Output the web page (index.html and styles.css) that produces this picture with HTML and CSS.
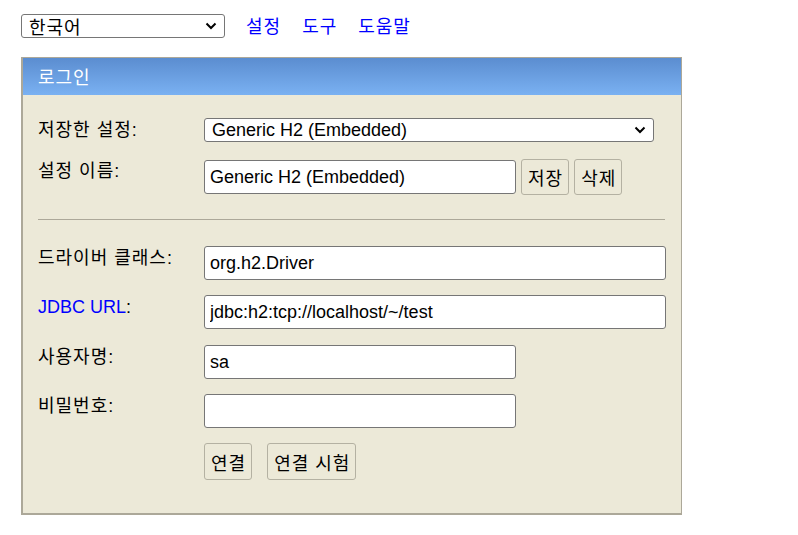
FILE: index.html
```html
<!DOCTYPE html>
<html lang="ko">
<head>
<meta charset="utf-8">
<title>H2 Console</title>
<link rel="stylesheet" href="styles.css">
</head>
<body>
<div class="topbar">
  <span class="sel-wrap">
    <select class="lang"><option>한국어</option></select>
    <svg class="chev" width="12" height="8" viewBox="0 0 12 8"><path d="M1.5 1.5 L6 6 L10.5 1.5" fill="none" stroke="#000" stroke-width="2"/></svg>
  </span>
  <a class="toplink" href="#">설정</a>
  <a class="toplink" href="#">도구</a>
  <a class="toplink" href="#">도움말</a>
</div>
<div class="panel">
  <div class="panel-head">로그인</div>
  <div class="panel-body">
    <div class="row row-saved">
      <label class="lbl">저장한 설정:</label>
      <span class="sel-wrap">
        <select class="sel-saved"><option>Generic H2 (Embedded)</option></select>
        <svg class="chev" width="12" height="8" viewBox="0 0 12 8"><path d="M1.5 1.5 L6 6 L10.5 1.5" fill="none" stroke="#000" stroke-width="2"/></svg>
      </span>
    </div>
    <div class="row row-name">
      <label class="lbl">설정 이름:</label>
      <div class="field-group">
        <input class="inp inp-short" type="text" value="Generic H2 (Embedded)">
        <button class="btn">저장</button>
        <button class="btn">삭제</button>
      </div>
    </div>
    <hr class="sep">
    <div class="row">
      <label class="lbl">드라이버 클래스:</label>
      <input class="inp inp-long" type="text" value="org.h2.Driver">
    </div>
    <div class="row row-url">
      <label class="lbl"><a class="jdbc" href="#">JDBC URL</a>:</label>
      <input class="inp inp-long" type="text" value="jdbc:h2:tcp://localhost/~/test">
    </div>
    <div class="row">
      <label class="lbl">사용자명:</label>
      <input class="inp inp-short" type="text" value="sa">
    </div>
    <div class="row">
      <label class="lbl">비밀번호:</label>
      <input class="inp inp-short" type="password" value="">
    </div>
    <div class="row row-actions">
      <span></span>
      <div class="actions">
        <button class="btn">연결</button>
        <button class="btn">연결 시험</button>
      </div>
    </div>
  </div>
</div>
</body>
</html>
```
FILE: styles.css
```css
html, body {
  margin: 0;
  padding: 0;
  background: #ffffff;
}
body {
  font-family: "Liberation Sans", Arial, "Noto Sans CJK KR", sans-serif;
  font-size: 18px;
  color: #000;
}
.topbar {
  display: flex;
  align-items: center;
  padding: 14px 0 0 21px;
  height: 24px;
}
.sel-wrap {
  position: relative;
  display: inline-flex;
  justify-self: start;
}
.chev {
  position: absolute;
  right: 8px;
  top: 8px;
  pointer-events: none;
}
.lang, .sel-saved {
  -webkit-appearance: none;
  appearance: none;
  box-sizing: border-box;
  border: 1px solid #767676;
  border-radius: 3px;
  background: #fff;
  color: #000;
  height: 24px;
  margin: 0;
}
.lang {
  width: 204px;
  font-family: "Noto Sans CJK KR", sans-serif;
  font-size: 18px;
  letter-spacing: 1px;
  line-height: 22px;
  padding: 0 20px 0 7px;
}
.topbar .sel-wrap {
  margin-right: 21px;
}
.toplink {
  color: #0000ff;
  text-decoration: none;
  font-family: "Noto Sans CJK KR", sans-serif;
  font-size: 18px;
  letter-spacing: 1px;
  line-height: 20px;
  margin-right: 21px;
  margin-bottom: 3px;
}
.panel {
  margin: 19px 0 0 21px;
  width: 658px;
  border-left: 2px solid #aca899;
  border-top: 1px solid #aca899;
  border-right: 1px solid #aca899;
  border-bottom: 2px solid #aca899;
  background: #ece9d8;
}
.panel-head {
  height: 37px;
  line-height: 36px;
  padding-left: 15px;
  color: #fff;
  font-family: "Noto Sans CJK KR", sans-serif;
  font-size: 18px;
  letter-spacing: 1px;
  background: linear-gradient(to bottom, #5b8dd0, #7ab1f2);
}
.panel-body {
  padding: 23px 15px 33px 15px;
  display: flex;
  flex-direction: column;
}
.row {
  display: grid;
  grid-template-columns: 166px auto;
  align-items: start;
  margin-bottom: 15px;
}
.row-saved {
  margin-bottom: 17px;
  align-items: center;
}
.row-saved .lbl {
  line-height: 24px;
}
.row-name {
  margin-bottom: 24px;
}
.row-url {
  margin-bottom: 16px;
}
.lbl {
  font-family: "Liberation Sans", Arial, "Noto Sans CJK KR", sans-serif;
  font-size: 18px;
  letter-spacing: 1px;
  line-height: 24px;
  padding-top: 0;
}
.jdbc {
  color: #0000ff;
  text-decoration: none;
  letter-spacing: 0;
}
.sel-saved {
  width: 450px;
  font-family: "Liberation Sans", Arial, sans-serif;
  font-size: 18px;
  line-height: 22px;
  padding: 0 20px 0 7px;
}
.field-group {
  display: flex;
  align-items: center;
  gap: 5px;
}
.inp {
  box-sizing: border-box;
  height: 34px;
  font-family: "Liberation Sans", Arial, sans-serif;
  font-size: 18px;
  border: 1px solid #767676;
  border-radius: 3px;
  background: #fff;
  padding: 0 5px;
}
.inp-short { width: 312px; }
.inp-long { width: 462px; }
.sep {
  width: 627px;
  margin: 0 0 26px 0;
  border: 0;
  border-top: 1px solid #aca899;
  height: 0;
}
.btn {
  box-sizing: border-box;
  height: 36px;
  font-family: "Noto Sans CJK KR", sans-serif;
  font-size: 18px;
  letter-spacing: 1px;
  color: #000;
  background: #ece9d8;
  border: 1px solid #b4b1a2;
  border-radius: 3px;
  padding: 0 5px 0 6px;
}
.row-actions {
  margin-bottom: 0;
}
.actions {
  display: flex;
  gap: 15px;
}
.actions .btn {
  height: 37px;
}
```
